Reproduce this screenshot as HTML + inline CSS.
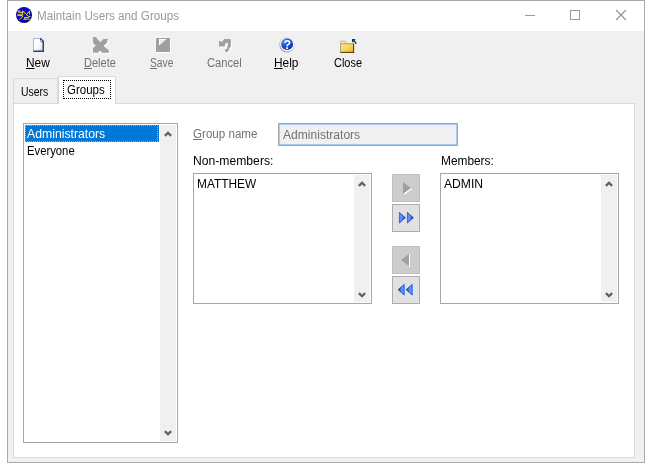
<!DOCTYPE html>
<html><head><meta charset="utf-8">
<style>
html,body{margin:0;padding:0;background:#fff;}
body{width:652px;height:470px;position:relative;overflow:hidden;font-family:"Liberation Sans",sans-serif;font-size:12px;color:#000;}
.abs{position:absolute;}
#win{position:absolute;left:7px;top:0;width:636px;height:461px;border:1px solid #aaa;background:#f0f0f0;box-sizing:content-box;}
#title{position:absolute;left:8px;top:1px;width:636px;height:30px;background:#fff;}
.t{position:absolute;white-space:nowrap;line-height:14px;height:14px;transform-origin:0 0;}
.g{color:#727272;}
u{text-decoration:underline;text-decoration-thickness:1px;text-underline-offset:1px;}
#pane{position:absolute;left:13px;top:103px;width:620px;height:353px;border:1px solid #d9d9d9;background:#fff;}
.lb{position:absolute;border:1px solid #a3a6ad;background:#fff;box-sizing:border-box;}
.sb{position:absolute;background:#f0f0f0;width:16px;}
.btn{position:absolute;width:28px;height:28px;box-sizing:border-box;left:392px;}
.btn.d{background:#cccccc;border:1px solid #bfbfbf;}
.btn.e{background:#e1e1e1;border:1px solid #adadad;}
svg{position:absolute;overflow:visible;}
#root{position:absolute;left:0;top:0;width:652px;height:470px;will-change:transform;}
</style></head><body>
<div id="root">
<div id="win"></div>
<div id="title"></div>

<!-- title icon -->
<svg style="left:16px;top:7px" width="16" height="16" viewBox="0 0 16 16">
<defs><radialGradient id="gi" cx="0.42" cy="0.4" r="0.62"><stop offset="0" stop-color="#1010f0"/><stop offset="0.6" stop-color="#0606cc"/><stop offset="0.85" stop-color="#020290"/><stop offset="1" stop-color="#000050"/></radialGradient></defs>
<circle cx="8" cy="8" r="8" fill="url(#gi)"/>
<path d="M4 4 H2.200 V5.200 L6.600 5.700 M6.600 4.500 V7.100 M1.900 7.800 H6.400 M1.900 8.600 H5.900 M6.800 9.200 L4 12.400 M7.100 4.300 L10.600 7.500 L13.600 4 V7.100 M10.600 7.800 L12.400 9.400 H13.900 M8.700 10.600 H12.900 L13.600 9.900 M8.200 12.200 H13.400 M8.200 12.200 L9.600 10.600" stroke="#f0e020" stroke-width="0.950" fill="none" stroke-linecap="square"/>
</svg>
<div class="t" id="ttl" style="transform:scaleX(0.973);left:36.8px;top:8.6px;color:#999;">Maintain Users and Groups</div>

<!-- caption buttons -->
<div class="abs" style="left:525px;top:15px;width:10px;height:1px;background:#999"></div>
<div class="abs" style="left:570px;top:10px;width:8px;height:8px;border:1px solid #999"></div>
<svg style="left:616px;top:10px" width="10" height="10" viewBox="0 0 10 10"><path d="M0 0 L10 10 M10 0 L0 10" stroke="#929292" stroke-width="1.080" fill="none"/></svg>

<!-- toolbar -->
<!-- New icon -->
<svg style="left:33px;top:38px" width="11" height="14" viewBox="0 0 11 14">
<defs><linearGradient id="gn" x1="0" y1="0" x2="1" y2="1"><stop offset="0" stop-color="#fff"/><stop offset="0.5" stop-color="#fdfdff"/><stop offset="1" stop-color="#c4caf0"/></linearGradient></defs>
<path d="M0 0 H7.500 L11 3.500 V14 H0 Z" fill="url(#gn)"/>
<path d="M0.500 13 V0.500 H7.500" fill="none" stroke="#a6b6ec" stroke-width="1"/>
<path d="M0.300 13.250 H11 M10.250 14 V3.500" fill="none" stroke="#2c4468" stroke-width="1.500"/>
<path d="M7 0 H8 L11 3 V5 H9.800 V4.200 H7.600 V3.400 L7 1 Z" fill="#2c4468"/>
<path d="M7.800 1.600 L9.600 3.400 H7.800 Z" fill="#fff"/>
</svg>
<div class="t" id="tnew" style="transform:scaleX(0.99);left:25.9px;top:56px;"><u>N</u>ew</div>

<!-- Delete icon -->
<svg style="left:93px;top:37px" width="18" height="18" viewBox="0 0 18 18">
<path d="M0 0 H2.700 L7.300 5.200 L10.300 2.100 H14.900 L13.900 5.700 L10.600 9 L15.900 13.400 V15.700 H9.300 L7.300 13.600 L5 15.700 H0 V11.300 L2.700 8.800 L0 5.700 Z" fill="#fff" transform="translate(1,1)"/>
<path d="M0 0 H2.700 L7.300 5.200 L10.300 2.100 H14.900 L13.900 5.700 L10.600 9 L15.900 13.400 V15.700 H9.300 L7.300 13.600 L5 15.700 H0 V11.300 L2.700 8.800 L0 5.700 Z" fill="#a0a0a0"/>
</svg>
<div class="t g" id="tdel" style="transform:scaleX(0.920);left:84.2px;top:56px;"><u>D</u>elete</div>

<!-- Save icon -->
<svg style="left:155px;top:37px" width="16" height="16" viewBox="0 0 16 16">
<rect x="0.500" y="0.500" width="15" height="15" fill="#fbfbfb"/>
<rect x="2" y="2" width="14" height="14" fill="#fff"/>
<rect x="1" y="1" width="14" height="14" fill="#a0a0a0"/>
<path d="M4 2 H11.500 L4 8.500 Z" fill="#fff"/>
<path d="M5 3 H9.500 L5 6.800 Z" fill="#e8e8e8"/>
</svg>
<div class="t g" id="tsave" style="transform:scaleX(0.852);left:150.0px;top:56px;"><u>S</u>ave</div>

<!-- Cancel icon -->
<svg style="left:219px;top:39px" width="14" height="15" viewBox="0 0 14 15">
<path d="M0 2 H1.700 L2.800 3.300 L5.200 0 H11 L11.900 1 V7.600 L10.500 9 L10 11 L8.500 12.900 H6.200 V10.200 L8 10 L8.400 7.600 L9.200 4 H7 L6 5.500 L5.800 7.600 H0 Z" fill="#fff" transform="translate(1,1)"/>
<path d="M0 2 H1.700 L2.800 3.300 L5.200 0 H11 L11.900 1 V7.600 L10.500 9 L10 11 L8.500 12.900 H6.200 V10.200 L8 10 L8.400 7.600 L9.200 4 H7 L6 5.500 L5.800 7.600 H0 Z" fill="#a0a0a0"/>
</svg>
<div class="t g" id="tcan" style="transform:scaleX(0.930);left:207.0px;top:56px;">Cancel</div>

<!-- Help icon -->
<svg style="left:279px;top:37px" width="16" height="16" viewBox="0 0 16 16">
<defs><radialGradient id="gh" cx="0.3" cy="0.25" r="0.9"><stop offset="0" stop-color="#4a8af0"/><stop offset="0.5" stop-color="#1a50d0"/><stop offset="1" stop-color="#0028a8"/></radialGradient>
<linearGradient id="gr" x1="1" y1="0" x2="0" y2="1"><stop offset="0" stop-color="#e4e4e4"/><stop offset="0.5" stop-color="#c8c8c4"/><stop offset="1" stop-color="#8c8c84"/></linearGradient></defs>
<circle cx="8" cy="7.800" r="7.700" fill="url(#gr)"/>
<circle cx="8.100" cy="7.300" r="6.900" fill="#fff"/>
<circle cx="8.100" cy="7.200" r="5.900" fill="url(#gh)"/>
<text x="8.300" y="11.800" font-family="Liberation Sans, sans-serif" font-weight="bold" font-size="12.500" fill="#fff" text-anchor="middle">?</text>
</svg>
<div class="t" id="thelp" style="transform:scaleX(0.99);left:274.0px;top:56px;"><u>H</u>elp</div>

<!-- Close icon -->
<svg style="left:340px;top:39px" width="17" height="15" viewBox="0 0 17 15">
<defs><linearGradient id="gf" x1="0" y1="0" x2="1" y2="1"><stop offset="0" stop-color="#ffee90"/><stop offset="0.5" stop-color="#f8d458"/><stop offset="1" stop-color="#eca828"/></linearGradient></defs>
<path d="M0.500 3 Q0.500 2.200 1.500 2.200 H5.500 L6.800 4.500 H0.500 Z" fill="#fdf0a8" stroke="#b8a888" stroke-width="0.800"/>
<rect x="0.300" y="4.400" width="13.700" height="9.400" fill="url(#gf)"/>
<path d="M0.500 13.500 V4.800 H13.500" fill="none" stroke="#a89878" stroke-width="0.900"/>
<path d="M0.300 13.400 H14 M13.600 13.800 V4.600" fill="none" stroke="#3a2810" stroke-width="0.900"/>
<path d="M12 0 H15.200 V1.200 H14.300 L16.300 3.300 L16.400 5 L15.300 5 L15 3.800 L13.300 2.200 V3.200 H12 Z" fill="#1c2c68"/>
</svg>
<div class="t" id="tclose" style="transform:scaleX(0.915);left:334.4px;top:56px;">Close</div>

<!-- tabs -->
<div class="abs" style="left:13px;top:78px;width:45px;height:25px;border:1px solid #d9d9d9;border-bottom:none;background:#f0f0f0;box-sizing:border-box"></div>
<div id="pane"></div>
<div class="abs" style="left:58px;top:76px;width:58px;height:28px;border:1px solid #d9d9d9;border-bottom:none;background:#fff;box-sizing:border-box"></div>
<div class="abs" style="left:63px;top:80px;width:48px;height:19px;border:1px dotted #000;box-sizing:border-box"></div>
<div class="t" id="tusers" style="transform:scaleX(0.871);left:20.7px;top:85px;">Users</div>
<div class="t" id="tgroups" style="transform:scaleX(0.959);left:67.3px;top:83px;">Groups</div>

<!-- left listbox -->
<div class="lb" style="left:23px;top:123px;width:155px;height:320px;"></div>
<div class="abs" style="left:25px;top:125px;width:134px;height:17px;background:#0078d7;"></div>
<div class="abs" style="left:25px;top:125px;width:133px;height:17px;box-sizing:border-box;border:1px dotted #f0a040;"></div>
<div class="sb" style="left:160px;top:125px;height:316px;"></div>
<svg style="left:163.5px;top:131px" width="8" height="6" viewBox="0 0 8 6"><path d="M0.900 4.900 L4 1.800 L7.100 4.900" stroke="#606060" stroke-width="2.300" fill="none"/></svg>
<svg style="left:163.5px;top:430px" width="8" height="6" viewBox="0 0 8 6"><path d="M0.900 1.100 L4 4.200 L7.100 1.100" stroke="#606060" stroke-width="2.300" fill="none"/></svg>
<div class="t" id="tadm" style="transform:scaleX(1.02);left:27.2px;top:127.4px;color:#fff;">Administrators</div>
<div class="t" id="tevery" style="transform:scaleX(0.94);left:27.4px;top:144px;">Everyone</div>

<!-- group name -->
<div class="t g" id="tgn" style="transform:scaleX(0.966);left:193.4px;top:127px;"><u>G</u>roup name</div>
<div class="abs" style="left:278px;top:123px;width:180px;height:23px;box-sizing:border-box;border:1px solid #a9a9a9;background:#f0f0f0;box-shadow:inset 0 0 0 1px #a8c8ee;"></div>
<div class="t g" id="tadm2" style="transform:scaleX(1.006);left:283.0px;top:128px;">Administrators</div>

<div class="t" id="tnm" style="transform:scaleX(1.013);left:193.1px;top:154px;">Non-members:</div>
<div class="t" id="tmem" style="transform:scaleX(0.99);left:441.0px;top:154px;">Members:</div>

<!-- Non-members listbox -->
<div class="lb" style="left:193px;top:173px;width:179px;height:131px;"></div>
<div class="sb" style="left:354px;top:175px;height:127px;"></div>
<svg style="left:357.5px;top:181px" width="8" height="6" viewBox="0 0 8 6"><path d="M0.900 4.900 L4 1.800 L7.100 4.900" stroke="#606060" stroke-width="2.300" fill="none"/></svg>
<svg style="left:357.5px;top:292px" width="8" height="6" viewBox="0 0 8 6"><path d="M0.900 1.100 L4 4.200 L7.100 1.100" stroke="#606060" stroke-width="2.300" fill="none"/></svg>
<div class="t" id="tmat" style="transform:scaleX(0.99);left:197.0px;top:177px;">MATTHEW</div>

<!-- Members listbox -->
<div class="lb" style="left:440px;top:173px;width:179px;height:131px;"></div>
<div class="sb" style="left:601px;top:175px;height:127px;"></div>
<svg style="left:604.5px;top:181px" width="8" height="6" viewBox="0 0 8 6"><path d="M0.900 4.900 L4 1.800 L7.100 4.900" stroke="#606060" stroke-width="2.300" fill="none"/></svg>
<svg style="left:604.5px;top:292px" width="8" height="6" viewBox="0 0 8 6"><path d="M0.900 1.100 L4 4.200 L7.100 1.100" stroke="#606060" stroke-width="2.300" fill="none"/></svg>
<div class="t" id="tadmin" style="transform:scaleX(1.01);left:444.0px;top:177px;">ADMIN</div>

<!-- move buttons -->
<div class="btn d" style="top:174px"></div>
<svg style="left:403px;top:182px" width="9" height="13" viewBox="0 0 9 13"><path d="M1 1 L9 7 L1 13 Z" fill="#fff"/><path d="M0 0 L8 6 L0 12 Z" fill="#a0a0a0"/></svg>
<div class="btn e" style="top:204px"></div>
<svg style="left:399px;top:212px" width="15" height="12" viewBox="0 0 15 12"><defs><linearGradient id="gb" x1="0" y1="0" x2="1" y2="0"><stop offset="0" stop-color="#3878ff"/><stop offset="0.35" stop-color="#6898f4"/><stop offset="1" stop-color="#1038b0"/></linearGradient><linearGradient id="gb2" x1="1" y1="0" x2="0" y2="0"><stop offset="0" stop-color="#3878ff"/><stop offset="0.35" stop-color="#6898f4"/><stop offset="1" stop-color="#1038b0"/></linearGradient></defs>
<path d="M0 0 L6.500 5.700 L0 11.400 Z" fill="url(#gb)"/><path d="M8 0 L14.500 5.700 L8 11.400 Z" fill="url(#gb)"/>
<path d="M0.300 0.300 L6.300 5.700 L0.300 11.100 M8.300 0.300 L14.300 5.700 L8.300 11.100" fill="none" stroke="#0c2890" stroke-width="0.800" stroke-opacity="0.800"/>
<path d="M0.400 0.500 V11 M8.400 0.500 V11" fill="none" stroke="#2c6cff" stroke-width="0.900"/></svg>
<div class="btn d" style="top:246px"></div>
<svg style="left:401.300px;top:254px" width="9" height="13" viewBox="0 0 9 13"><path d="M8 0 H9 V13 H8Z" fill="#fff"/><path d="M8 0 L0 6 L8 12 Z" fill="#a0a0a0"/></svg>
<div class="btn e" style="top:276px"></div>
<svg style="left:398px;top:284px" width="15" height="12" viewBox="0 0 15 12">
<path d="M6.500 0 L0 5.700 L6.500 11.400 Z" fill="url(#gb2)"/><path d="M14.500 0 L8 5.700 L14.500 11.400 Z" fill="url(#gb2)"/>
<path d="M6.200 0.300 L0.200 5.700 L6.200 11.100 M14.200 0.300 L8.200 5.700 L14.200 11.100" fill="none" stroke="#0c2890" stroke-width="0.800" stroke-opacity="0.800"/>
<path d="M6.100 0.500 V11 M14.100 0.500 V11" fill="none" stroke="#2c6cff" stroke-width="0.900"/></svg>

</div>
</body></html>
